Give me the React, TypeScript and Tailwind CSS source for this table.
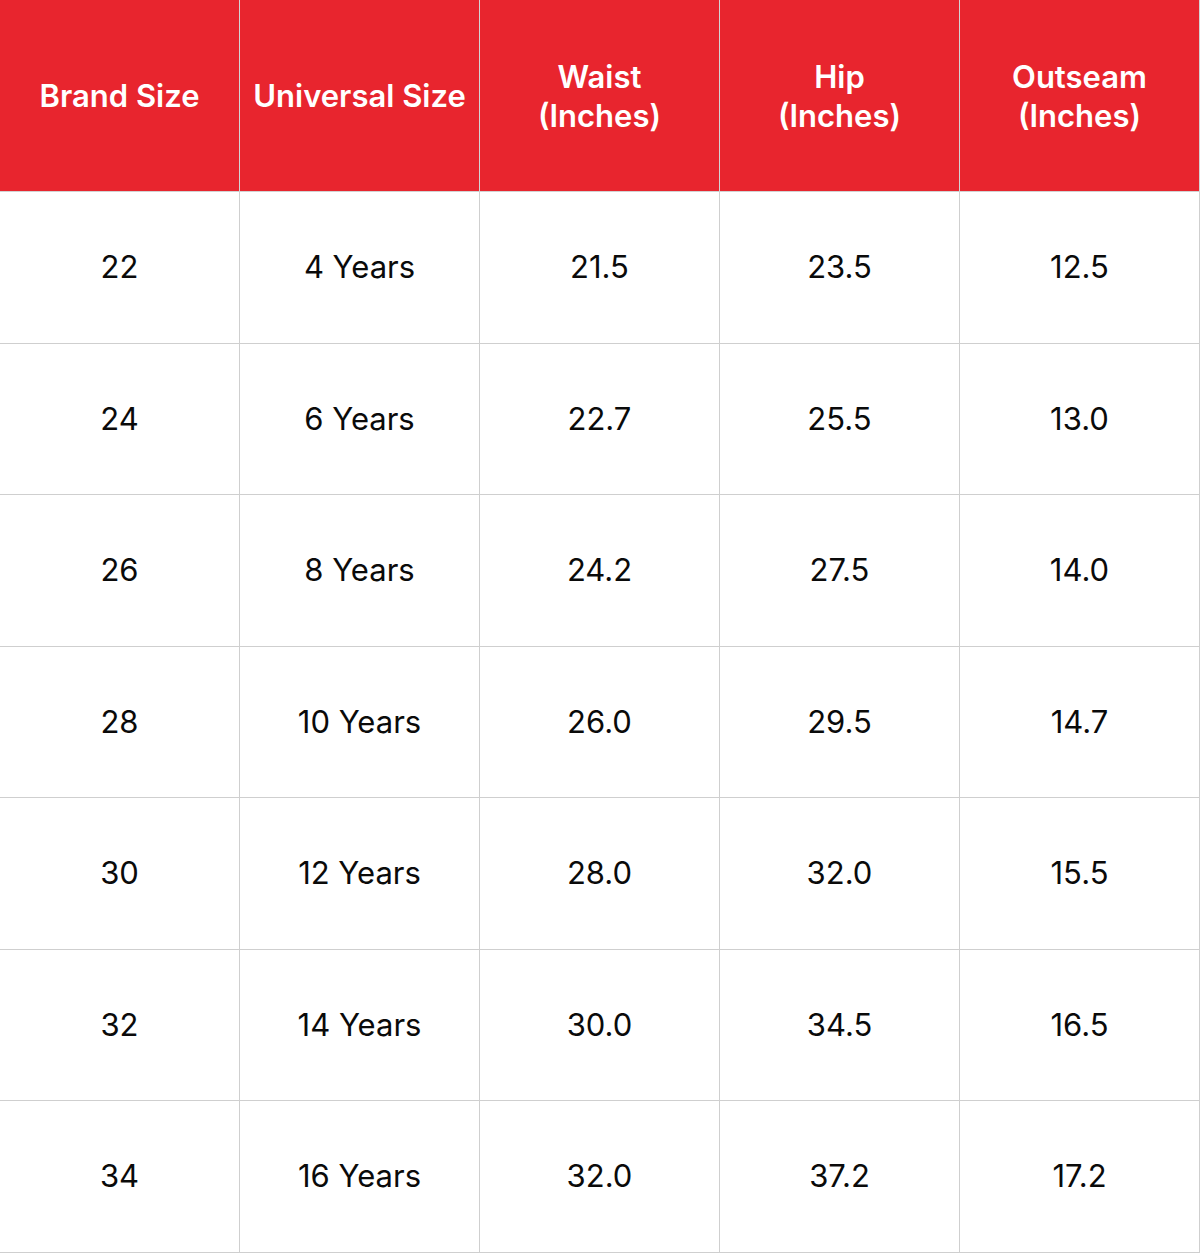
import React from "react";

const headers = [
  ["Brand Size"],
  ["Universal Size"],
  ["Waist", "(Inches)"],
  ["Hip", "(Inches)"],
  ["Outseam", "(Inches)"],
];

const rows = [
  ["22", "4 Years", "21.5", "23.5", "12.5"],
  ["24", "6 Years", "22.7", "25.5", "13.0"],
  ["26", "8 Years", "24.2", "27.5", "14.0"],
  ["28", "10 Years", "26.0", "29.5", "14.7"],
  ["30", "12 Years", "28.0", "32.0", "15.5"],
  ["32", "14 Years", "30.0", "34.5", "16.5"],
  ["34", "16 Years", "32.0", "37.2", "17.2"],
];

const App = () => {
  return (
    <div className="w-[1200px] bg-white font-['Inter',sans-serif]">
      {/* header */}
      <div className="flex h-[192px] bg-[#e8252e]">
        {headers.map((lines, i) => (
          <div
            key={i}
            className="flex w-[240px] flex-col items-center justify-center border-r border-b border-[#d2d2d2] text-[31px] font-semibold leading-[39px] text-white"
          >
            {lines.map((l) => (
              <span key={l}>{l}</span>
            ))}
          </div>
        ))}
      </div>

      {/* body */}
      {rows.map((row, r) => (
        <div key={r} className={`flex ${r % 2 === 0 ? "h-[152px]" : "h-[151px]"}`}>
          {row.map((cell, c) => (
            <div
              key={c}
              className="flex w-[240px] items-center justify-center border-r border-b border-[#cfcfcf] text-[31px] text-[#0a0a0a]"
            >
              {cell}
            </div>
          ))}
        </div>
      ))}
    </div>
  );
};

export default App;
